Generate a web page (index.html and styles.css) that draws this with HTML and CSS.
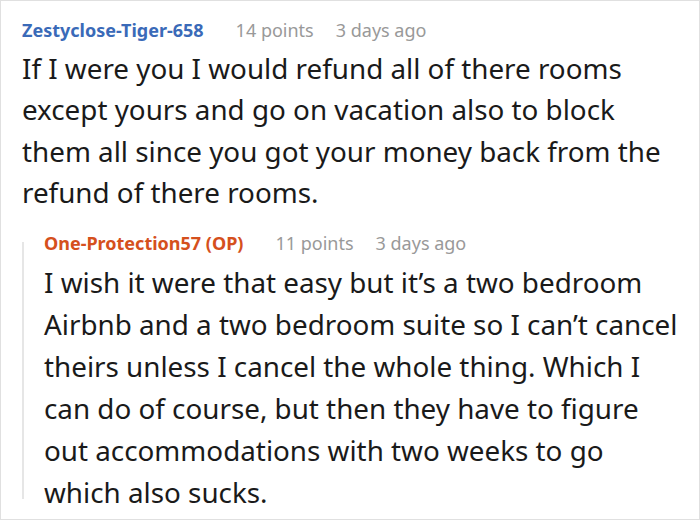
FILE: index.html
```html
<!DOCTYPE html>
<html>
<head>
<meta charset="utf-8">
<link rel="stylesheet" href="styles.css">
</head>
<body>
<div class="frame">
  <div class="comment">
    <div class="meta">
      <span class="author author-blue">Zestyclose-Tiger-658</span>
      <span class="info">14 points</span>
      <span class="info">3 days ago</span>
    </div>
    <p class="text">If I were you I would refund all of there rooms except yours and go on vacation also to block them all since you got your money back from the refund of there rooms.</p>
    <div class="reply">
      <div class="rule"></div>
      <div class="reply-body">
        <div class="meta">
          <span class="author author-orange">One-Protection57 (OP)</span>
          <span class="info">11 points</span>
          <span class="info">3 days ago</span>
        </div>
        <p class="text">I wish it were that easy but it’s a two bedroom Airbnb and a two bedroom suite so I can’t cancel theirs unless I cancel the whole thing. Which I can do of course, but then they have to figure out accommodations with two weeks to go which also sucks.</p>
      </div>
    </div>
  </div>
</div>
</body>
</html>
```

FILE: styles.css
```css
html, body {
  margin: 0;
  padding: 0;
  background: #fff;
}
.frame {
  box-sizing: border-box;
  width: 700px;
  height: 520px;
  border: 1px solid #e0e0e0;
  font-family: "Noto Sans", sans-serif;
  color: #1a1a1a;
  overflow: hidden;
}
.comment {
  padding: 17px 0 0 21px;
}
.meta {
  display: flex;
  gap: 22px;
  font-size: 18px;
  line-height: 24px;
}
.author {
  font-weight: bold;
  margin-right: 10px;
}
.author-blue { color: #3a6ab8; }
.author-orange { color: #d5501d; }
.info { color: #999; }
.text {
  margin: 5.5px 0 0;
  font-size: 27.8px;
  line-height: 41.5px;
  width: 650px;
}
.reply {
  display: flex;
  margin-top: 17.5px;
}
.rule {
  width: 2px;
  background: #e6e6e6;
  margin: 11px 0 14px 0;
  flex: none;
}
.reply-body {
  padding-left: 20px;
}
.reply .text {
  width: 640px;
  margin-top: 6px;
  line-height: 42px;
}
```
